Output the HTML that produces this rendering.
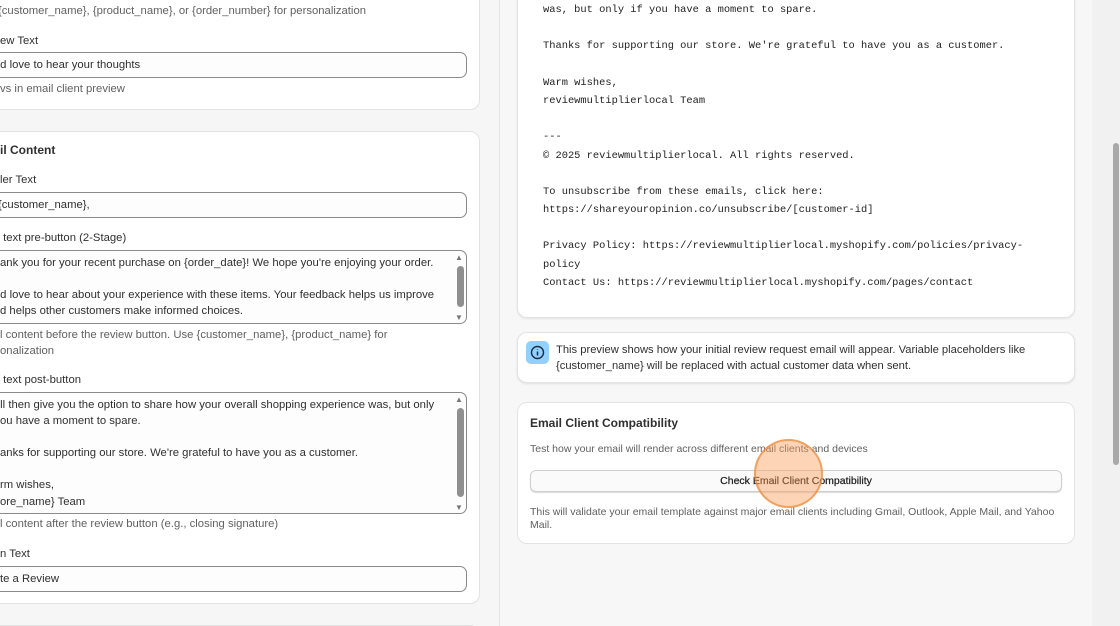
<!DOCTYPE html>
<html><head><meta charset="utf-8"><style>
*{box-sizing:border-box;margin:0;padding:0}
html,body{width:1120px;height:626px;overflow:hidden}
body{position:relative;background:#f7f7f8;font-family:"Liberation Sans",sans-serif;color:#303030}
.abs{position:absolute}
.left{left:0;top:0;width:500px;height:626px;background:#f6f6f7;border-right:1px solid #e3e3e3}
.card{position:absolute;background:#fff;border:1px solid #e3e3e3;border-radius:10px}
.t{position:absolute;font-size:11.3px;white-space:nowrap;line-height:16px}
.g{color:#616161}
.inp{position:absolute;left:-10px;width:477px;border:1px solid #8a8a8a;border-radius:7px;background:#fdfdfd}
.mono{position:absolute;left:543px;font-family:"Liberation Mono",monospace;font-size:10.4px;color:#222;white-space:nowrap;line-height:18px}
.sb{position:absolute;width:7px;background:#8f8f8f;border-radius:4px}
.r{font-size:10.5px}
</style></head><body>
<div class="abs left"></div>
<div class="card" style="left:-10px;top:-10px;width:490px;height:120px"></div>
<div class="card" style="left:-10px;top:131px;width:490px;height:473px"></div>
<div class="card" style="left:-10px;top:625px;width:490px;height:20px"></div>

<div class="t g" style="left:-2px;top:3px">{customer_name}, {product_name}, or {order_number} for personalization</div>
<div class="t" style="left:0;top:33px">ew Text</div>
<div class="inp" style="top:52px;height:26px"></div>
<div class="t" style="left:-2px;top:57px">'d love to hear your thoughts</div>
<div class="t g" style="left:0;top:81px">vs in email client preview</div>

<div class="t" style="left:0;top:142px;font-weight:bold;font-size:12px">il Content</div>
<div class="t" style="left:0;top:172px">ler Text</div>
<div class="inp" style="top:192px;height:26px"></div>
<div class="t" style="left:-2px;top:197px">{customer_name},</div>
<div class="t" style="left:0;top:230px">&nbsp;text pre-button (2-Stage)</div>
<div class="inp" style="top:250px;height:74px"></div>
<div class="t" style="left:0;top:255px">ank you for your recent purchase on {order_date}! We hope you're enjoying your order.</div>
<div class="t" style="left:-2px;top:287px">'d love to hear about your experience with these items. Your feedback helps us improve</div>
<div class="t" style="left:0;top:303px">d helps other customers make informed choices.</div>
<div class="sb" style="left:457px;top:266px;height:41px"></div>
<div class="t" style="left:455px;top:250px;font-size:8px;color:#777">▲</div>
<div class="t" style="left:455px;top:310px;font-size:8px;color:#777">▼</div>
<div class="t g" style="left:0;top:327px">l content before the review button. Use {customer_name}, {product_name} for</div>
<div class="t g" style="left:0;top:343px">onalization</div>
<div class="t" style="left:0;top:372px">&nbsp;text post-button</div>
<div class="inp" style="top:392px;height:122px"></div>
<div class="t" style="left:-2px;top:397px">'ll then give you the option to share how your overall shopping experience was, but only</div>
<div class="t" style="left:0;top:413px">ou have a moment to spare.</div>
<div class="t" style="left:0;top:445px">anks for supporting our store. We're grateful to have you as a customer.</div>
<div class="t" style="left:0;top:477px">rm wishes,</div>
<div class="t" style="left:0;top:494px">ore_name} Team</div>
<div class="sb" style="left:457px;top:408px;height:89px"></div>
<div class="t" style="left:455px;top:392px;font-size:8px;color:#777">▲</div>
<div class="t" style="left:455px;top:500px;font-size:8px;color:#777">▼</div>
<div class="t g" style="left:0;top:516px">l content after the review button (e.g., closing signature)</div>
<div class="t" style="left:0;top:546px">n Text</div>
<div class="inp" style="top:566px;height:26px"></div>
<div class="t" style="left:0;top:571px">te a Review</div>

<!-- right -->
<div class="card" style="left:517px;top:-10px;width:558px;height:328px;box-shadow:0 1px 2px rgba(0,0,0,.08)"></div>
<div class="mono" style="top:1px">was, but only if you have a moment to spare.</div>
<div class="mono" style="top:37px">Thanks for supporting our store. We're grateful to have you as a customer.</div>
<div class="mono" style="top:74px">Warm wishes,</div>
<div class="mono" style="top:92px">reviewmultiplierlocal Team</div>
<div class="mono" style="top:128px">---</div>
<div class="mono" style="top:147px">© 2025 reviewmultiplierlocal. All rights reserved.</div>
<div class="mono" style="top:183px">To unsubscribe from these emails, click here:</div>
<div class="mono" style="top:201px">https://shareyouropinion.co/unsubscribe/[customer-id]</div>
<div class="mono" style="top:237px">Privacy Policy: https://reviewmultiplierlocal.myshopify.com/policies/privacy-</div>
<div class="mono" style="top:256px">policy</div>
<div class="mono" style="top:274px">Contact Us: https://reviewmultiplierlocal.myshopify.com/pages/contact</div>

<div class="card" style="left:517px;top:332px;width:558px;height:51px;box-shadow:0 1px 2px rgba(0,0,0,.1)"></div>
<div class="abs" style="left:526px;top:341px;width:23px;height:23px;background:#91d0ff;border-radius:5px"></div>
<svg class="abs" style="left:530px;top:345px" width="15" height="15" viewBox="0 0 15 15"><circle cx="7.5" cy="7.5" r="6" fill="none" stroke="#1f2d3d" stroke-width="1.4"/><path d="M7.5 6.5v4M7.5 4.2v.6" stroke="#1f2d3d" stroke-width="1.5"/></svg>
<div class="t" style="left:556px;top:342px;font-size:11.2px">This preview shows how your initial review request email will appear. Variable placeholders like</div>
<div class="t" style="left:556px;top:358px;font-size:11.2px">{customer_name} will be replaced with actual customer data when sent.</div>

<div class="card" style="left:517px;top:402px;width:558px;height:142px"></div>
<div class="t" style="left:530px;top:415px;font-size:12px;font-weight:bold">Email Client Compatibility</div>
<div class="t g r" style="left:530px;top:441px">Test how your email will render across different email clients and devices</div>
<div class="abs" style="left:530px;top:470px;width:532px;height:22px;border:1px solid #cfcfcf;border-radius:6px;background:#fafafa;box-shadow:0 1px 1px rgba(0,0,0,.15)"></div>
<div class="t" style="left:530px;top:473px;width:532px;text-align:center;font-size:10.5px;color:#222;-webkit-text-stroke:0.25px #222">Check Email Client Compatibility</div>
<div class="t g r" style="left:530px;top:504px">This will validate your email template against major email clients including Gmail, Outlook, Apple Mail, and Yahoo</div>
<div class="t g r" style="left:530px;top:517px">Mail.</div>
<div class="abs" style="left:754px;top:439px;width:69px;height:69px;border-radius:50%;background:rgba(250,160,90,.45);border:2px solid rgba(235,140,60,.7)"></div>

<div class="abs" style="left:1092px;top:0;width:28px;height:626px;background:#f1f1f1"></div>
<div class="abs" style="left:1113px;top:143px;width:6px;height:322px;background:#a9a9a9;border-radius:3px"></div>
</body></html>
